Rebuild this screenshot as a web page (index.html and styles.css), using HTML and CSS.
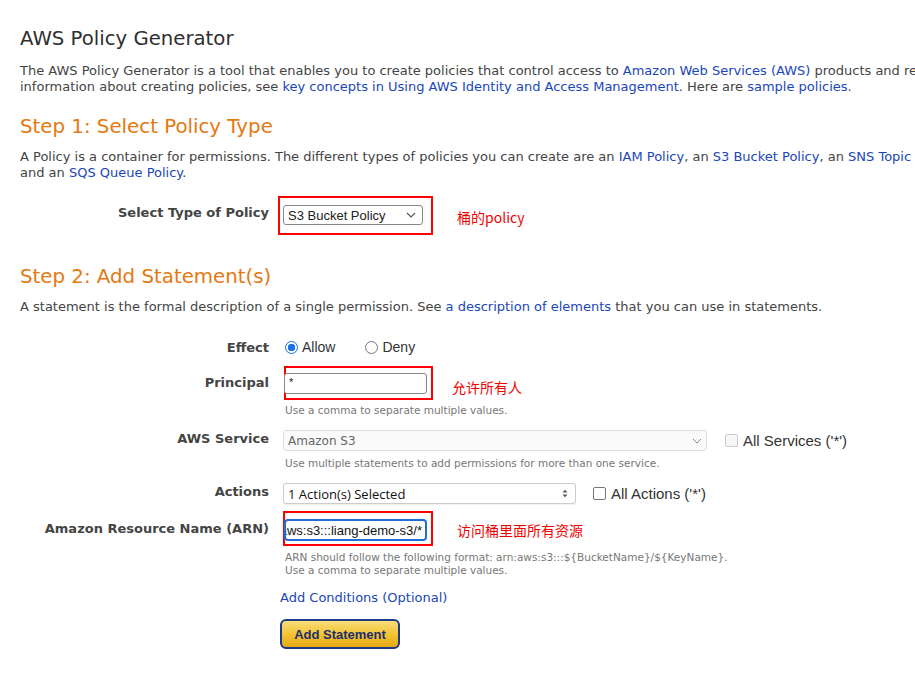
FILE: index.html
```html
<!DOCTYPE html>
<html lang="en">
<head>
<meta charset="utf-8">
<title>AWS Policy Generator</title>
<link rel="stylesheet" href="styles.css">
</head>
<body>
<div class="page">
  <h1 class="title">AWS Policy Generator</h1>
  <p class="para">The AWS Policy Generator is a tool that enables you to create policies that control access to <a href="#">Amazon Web Services (AWS)</a> products and resources. For more<br>information about creating policies, see <a href="#">key concepts in Using AWS Identity and Access Management</a>. Here are <a href="#">sample policies</a>.</p>

  <h2 class="step">Step 1: Select Policy Type</h2>
  <p class="para para-step">A Policy is a container for permissions. The different types of policies you can create are an <a href="#">IAM Policy</a>, an <a href="#">S3 Bucket Policy</a>, an <a href="#">SNS Topic Policy</a>, a <a href="#">VPC Endpoint Policy</a>,<br>and an <a href="#">SQS Queue Policy</a>.</p>

  <div class="row row-type">
    <div class="label lab-type">Select Type of Policy</div>
    <div class="control">
      <div class="row-inline">
        <div class="hl hl-type">
          <div class="select select-type"><span>S3 Bucket Policy</span><svg class="chev" width="10" height="6" viewBox="0 0 10 6"><path d="M1 1l4 4 4-4" fill="none" stroke="#555" stroke-width="1.1"/></svg></div>
        </div>
        <span class="note note-type">桶的policy</span>
      </div>
    </div>
  </div>

  <h2 class="step step2">Step 2: Add Statement(s)</h2>
  <p class="para para-step">A statement is the formal description of a single permission. See <a href="#">a description of elements</a> that you can use in statements.</p>

  <div class="row row-effect">
    <div class="label lab-effect">Effect</div>
    <div class="control c-effect">
      <label class="radio"><span class="rb on"></span>Allow</label>
      <label class="radio deny"><span class="rb"></span>Deny</label>
    </div>
  </div>

  <div class="row row-principal">
    <div class="label lab-principal">Principal</div>
    <div class="control">
      <div class="row-inline">
        <div class="hl hl-principal"><div class="input input-principal">*</div></div>
        <span class="note note-principal">允许所有人</span>
      </div>
      <div class="hint">Use a comma to separate multiple values.</div>
    </div>
  </div>

  <div class="row row-service">
    <div class="label lab-select">AWS Service</div>
    <div class="control">
      <div class="row-inline">
        <div class="select select-service"><span>Amazon S3</span><svg class="chev" width="10" height="6" viewBox="0 0 10 6"><path d="M1 1l4 4 4-4" fill="none" stroke="#888" stroke-width="1"/></svg></div>
        <label class="check dis"><span class="cb"></span>All Services ('*')</label>
      </div>
      <div class="hint hint-service">Use multiple statements to add permissions for more than one service.</div>
    </div>
  </div>

  <div class="row row-actions">
    <div class="label lab-select">Actions</div>
    <div class="control">
      <div class="row-inline">
        <div class="select select-actions"><span>1 Action(s) Selected</span><svg class="updown" width="6" height="9" viewBox="0 0 6 9"><path d="M0.5 3.5L3 0.8 5.5 3.5z M0.5 5.5L3 8.2 5.5 5.5z" fill="#555"/></svg></div>
        <label class="check chk-actions"><span class="cb"></span>All Actions ('*')</label>
      </div>
    </div>
  </div>

  <div class="row row-arn">
    <div class="label lab-arn">Amazon Resource Name (ARN)</div>
    <div class="control">
      <div class="row-inline">
        <div class="hl hl-arn"><div class="input input-arn"><span>arn:aws:s3:::liang-demo-s3/*</span></div></div>
        <span class="note note-arn">访问桶里面所有资源</span>
      </div>
      <div class="hint hint-arn">ARN should follow the following format: arn:aws:s3:::${BucketName}/${KeyName}.<br>Use a comma to separate multiple values.</div>
      <a href="#" class="cond">Add Conditions (Optional)</a>
      <button class="btn" type="button">Add Statement</button>
    </div>
  </div>
</div>
</body>
</html>
```

FILE: styles.css
```css
html, body {
  margin: 0;
  padding: 0;
  background: #fff;
}
body {
  width: 915px;
  height: 695px;
  overflow: hidden;
  font-family: "DejaVu Sans", Verdana, sans-serif;
  color: #444;
  font-size: 13px;
}
.page {
  width: 895px;
  height: 670px;
  overflow: hidden;
  padding: 25px 0 0 20px;
  white-space: nowrap;
}
a {
  color: #1a46b8;
  text-decoration: none;
}
.title {
  margin: 0;
  font-size: 19.7px;
  font-weight: normal;
  line-height: 28px;
  color: #2f2f2f;
}
.para {
  margin: 10px 0 0 0;
  line-height: 16px;
}
.para-step {
  margin-top: 8px;
}
.step {
  margin: 18px 0 0 0;
  font-size: 19.8px;
  font-weight: normal;
  color: #e47911;
  line-height: 28px;
}
.step2 {
  margin-top: 28px;
}

/* form rows */
.row {
  display: flex;
  align-items: flex-start;
  column-gap: 14px;
}
.label {
  width: 249px;
  flex: none;
  box-sizing: border-box;
  display: flex;
  align-items: center;
  justify-content: flex-end;
  font-weight: bold;
  color: #444;
  font-size: 13px;
}
.control {
  display: flex;
  flex-direction: column;
  align-items: flex-start;
}
.row-inline {
  display: flex;
  align-items: center;
}
.row-type { margin-top: 15px; }
.lab-type { height: 39px; padding-bottom: 6px; }
.row-effect { margin-top: 23px; }
.lab-effect { height: 18px; }
.row-principal { margin-top: 10px; }
.lab-principal { height: 34px; padding-bottom: 2px; }
.row-service { margin-top: 13px; }
.row-actions { margin-top: 13px; }
.lab-select { height: 21px; padding-bottom: 4px; }
.row-arn { margin-top: 7px; }
.lab-arn { height: 35px; padding-bottom: 1px; }

.hl {
  border: 2px solid #f00;
  box-sizing: border-box;
}
.hl-type {
  width: 155px;
  height: 39px;
  margin-left: -5px;
  padding: 7px 0 0 3px;
}
.select {
  box-sizing: border-box;
  display: flex;
  align-items: center;
  justify-content: space-between;
  border: 1px solid #aaa;
  border-radius: 4px;
  background: #fff;
  font-family: "Liberation Sans", Arial, sans-serif;
  font-size: 13px;
  color: #222;
  padding: 0 6px 0 4px;
}
.select-type {
  width: 140px;
  height: 20px;
  border-color: #888;
  border-radius: 3px;
}
.note {
  color: #f20000;
  font-family: "Noto Sans CJK SC", sans-serif;
  font-size: 14px;
}
.note-type {
  margin-left: 24px;
  margin-top: 2px;
}
.c-effect {
  flex-direction: row;
  align-items: center;
  height: 18px;
  font-family: "Liberation Sans", Arial, sans-serif;
  font-size: 14px;
  color: #333;
}
.radio {
  display: flex;
  align-items: center;
  margin-left: 2px;
}
.radio.deny { margin-left: 30px; }
.rb {
  box-sizing: border-box;
  width: 13px;
  height: 13px;
  border-radius: 50%;
  border: 1px solid #777;
  margin-right: 4px;
  background: #fff;
}
.rb.on {
  border: 1px solid #1a73e8;
  background: radial-gradient(circle, #1a73e8 0 3.5px, #fff 4px);
}
.hl-principal {
  width: 149px;
  height: 34px;
  margin-left: 1px;
  padding: 5px 0 0 0;
}
.input {
  box-sizing: border-box;
  border: 1px solid #888;
  border-radius: 3px;
  font-family: "Liberation Sans", Arial, sans-serif;
  color: #222;
  background: #fff;
}
.input-principal {
  width: 143px;
  height: 21px;
  margin-left: -2px;
  font-size: 11px;
  padding: 2px 4px;
}
.note-principal {
  margin-left: 19px;
  margin-top: 8px;
}
.hint {
  color: #777;
  font-size: 10.5px;
  line-height: 13px;
  margin-top: 4px;
  margin-left: 2px;
}
.select-service {
  width: 424px;
  height: 21px;
  border-color: #ddd;
  border-radius: 3px;
  background: #fafafa;
  color: #666;
  font-family: "DejaVu Sans", Verdana, sans-serif;
  font-size: 12px;
  padding-right: 4px;
}
.check {
  display: flex;
  align-items: center;
  font-family: "Liberation Sans", Arial, sans-serif;
  font-size: 15px;
  color: #333;
}
.row-service .check { margin-left: 18px; }
.cb {
  box-sizing: border-box;
  width: 13px;
  height: 13px;
  border: 1px solid #777;
  border-radius: 2px;
  margin-right: 5px;
  background: #fff;
}
.check.dis .cb {
  border-color: #ccc;
  background: #f6f6f6;
}
.hint-service { margin-top: 6px; }
.select-actions {
  width: 293px;
  height: 21px;
  border-color: #ccc;
  border-radius: 3px;
  font-family: "Open Sans", sans-serif;
  font-size: 13px;
  color: #111;
  padding-right: 7px;
  box-shadow: 0 1px 1px rgba(0,0,0,0.06);
}
.chk-actions { margin-left: 17px; }
.hl-arn {
  width: 150px;
  height: 35px;
  padding: 6px 0 0 0;
}
.input-arn {
  width: 143px;
  height: 22px;
  border: 2px solid #1f6fd6;
  border-radius: 4px;
  font-size: 13px;
  padding: 0 3px 0 0;
  margin-left: -1px;
  overflow: hidden;
  display: flex;
  align-items: center;
  justify-content: flex-end;
  white-space: nowrap;
  color: #111;
}
.input-arn span { flex: none; }
.note-arn {
  margin-left: 24px;
  margin-top: 3px;
}
.hint-arn { margin-top: 5px; }
.cond {
  display: block;
  margin-top: 12px;
  margin-left: -3px;
  font-size: 13px;
  line-height: 17px;
  color: #1a46b8;
}
.btn {
  display: block;
  margin-top: 13px;
  margin-left: -3px;
  width: 120px;
  height: 30px;
  border: 2px solid #1c3a84;
  border-radius: 6px;
  background: linear-gradient(#f9dd7a, #f2c230 55%, #e6a913);
  color: #1c2e6e;
  font-family: "Liberation Sans", Arial, sans-serif;
  font-weight: bold;
  font-size: 13px;
  padding: 0;
}
```
